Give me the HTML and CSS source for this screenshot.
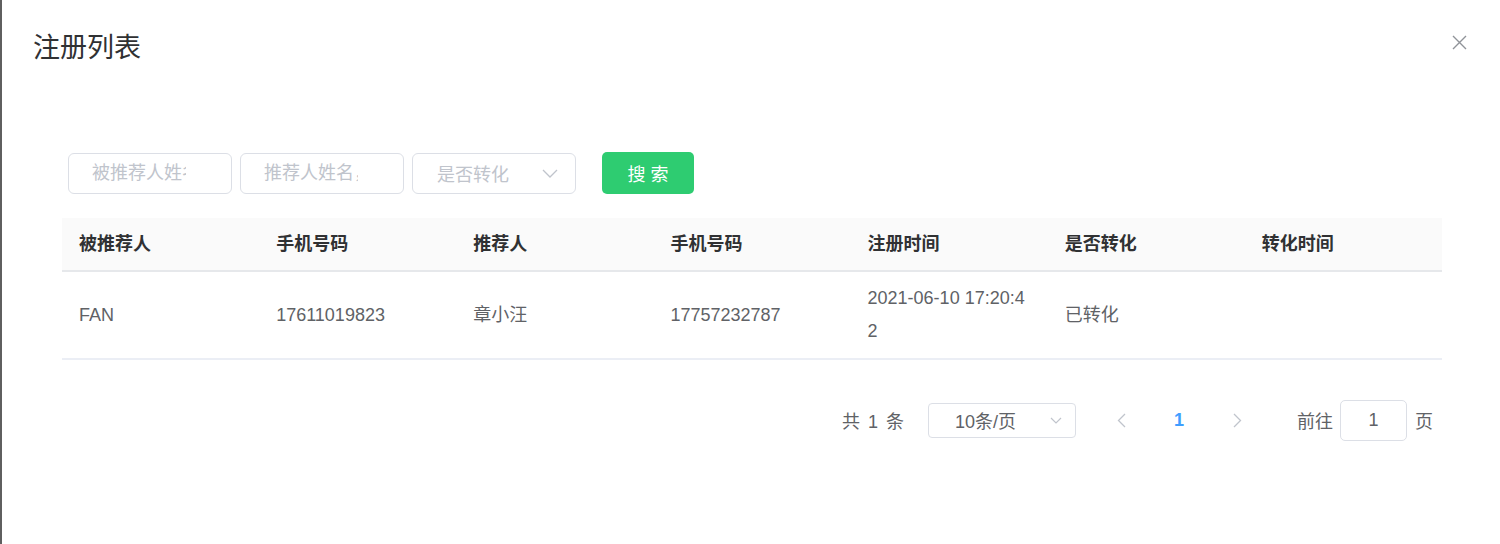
FILE: index.html
```html
<!DOCTYPE html>
<html lang="zh-CN">
<head>
<meta charset="utf-8">
<title>注册列表</title>
<link rel="stylesheet" href="styles.css">
</head>
<body>
<div class="dialog">
  <div class="dialog-header">
    <span class="dialog-title">注册列表</span>
    <button class="close-btn" aria-label="关闭">
      <svg width="15" height="15" viewBox="0 0 15 15"><path d="M1 1 L14 14 M14 1 L1 14" stroke="#909399" stroke-width="1.4" fill="none"/></svg>
    </button>
  </div>
  <div class="dialog-body">
    <div class="search-row">
      <input class="field" type="text" placeholder="被推荐人姓名，手机号">
      <input class="field" type="text" placeholder="推荐人姓名，手机号">
      <div class="field select-field">
        <span class="placeholder">是否转化</span>
        <svg class="arrow" width="16" height="9" viewBox="0 0 16 9"><path d="M1 1 L8 8 L15 1" stroke="#c0c4cc" stroke-width="1.3" fill="none"/></svg>
      </div>
      <button class="search-btn">搜 索</button>
    </div>

    <table class="data-table">
      <thead>
        <tr>
          <th>被推荐人</th>
          <th>手机号码</th>
          <th>推荐人</th>
          <th>手机号码</th>
          <th>注册时间</th>
          <th>是否转化</th>
          <th>转化时间</th>
        </tr>
      </thead>
      <tbody>
        <tr>
          <td>FAN</td>
          <td>17611019823</td>
          <td>章小汪</td>
          <td>17757232787</td>
          <td>2021-06-10 17:20:42</td>
          <td>已转化</td>
          <td></td>
        </tr>
      </tbody>
    </table>

    <div class="pagination">
      <span class="total">共 1 条</span>
      <div class="size-select">
        <span>10条/页</span>
        <svg class="arrow-sm" width="12" height="7" viewBox="0 0 12 7"><path d="M1 1 L6 6 L11 1" stroke="#c0c4cc" stroke-width="1.2" fill="none"/></svg>
      </div>
      <button class="page-nav" aria-label="上一页">
        <svg width="9" height="15" viewBox="0 0 9 15"><path d="M8 1 L1.5 7.5 L8 14" stroke="#c0c4cc" stroke-width="1.3" fill="none"/></svg>
      </button>
      <span class="pager-num">1</span>
      <button class="page-nav" aria-label="下一页">
        <svg width="9" height="15" viewBox="0 0 9 15"><path d="M1 1 L7.5 7.5 L1 14" stroke="#c0c4cc" stroke-width="1.3" fill="none"/></svg>
      </button>
      <span class="jump">前往</span>
      <input class="jump-input" type="text" value="1">
      <span class="jump-suffix">页</span>
    </div>
  </div>
</div>
</body>
</html>
```

FILE: styles.css
```css
* { box-sizing: border-box; }

html, body {
  margin: 0;
  padding: 0;
  height: 544px;
  overflow: hidden;
}

body {
  background: #5f5f5f;
  font-family: "Liberation Sans", "Noto Sans CJK SC", sans-serif;
  color: #606266;
}

.dialog {
  margin-left: 2px;
  height: 544px;
  background: #ffffff;
  position: relative;
}

.dialog-header {
  padding: 33px 0 0 31px;
  height: 64px;
}

.dialog-title {
  font-size: 27px;
  line-height: 31px;
  color: #303133;
}

.close-btn {
  position: absolute;
  top: 35px;
  right: 33px;
  padding: 0;
  border: 0;
  background: transparent;
  width: 15px;
  height: 15px;
  display: block;
}

.close-btn svg { display: block; }

.dialog-body {
  padding: 88px 58px 0 60px;
}

.search-row {
  display: flex;
  align-items: center;
  padding-left: 6px;
  height: 42px;
}

.field {
  width: 164px;
  height: 41px;
  border: 1px solid #dcdfe6;
  border-radius: 6px;
  margin-right: 8px;
  padding: 0 45px 0 23px;
  font-family: "Liberation Sans", "Noto Sans CJK SC", sans-serif;
  font-size: 18px;
  color: #606266;
  background: #fff;
  outline: none;
}

.field::placeholder { color: #c0c4cc; }

.select-field {
  display: flex;
  align-items: center;
  justify-content: space-between;
  padding: 0 17px 0 24px;
}

.select-field .placeholder {
  color: #c0c4cc;
  font-size: 18px;
}

.arrow { display: block; }

.search-btn {
  margin-left: 18px;
  width: 92px;
  height: 42px;
  border: 0;
  border-radius: 5px;
  background: #2ecc71;
  color: #ffffff;
  font-family: "Liberation Sans", "Noto Sans CJK SC", sans-serif;
  font-size: 18px;
  padding: 0;
}

.data-table {
  margin-top: 24px;
  width: 1380px;
  table-layout: fixed;
  border-collapse: collapse;
  font-size: 18px;
}

.data-table th {
  background: #fafafa;
  color: #303133;
  font-weight: 600;
  text-align: left;
  padding: 10px 17px;
  line-height: 32px;
  border-bottom: 2px solid #e6e8eb;
}

.data-table td {
  color: #606266;
  padding: 10px 17px;
  line-height: 33px;
  word-break: break-all;
  border-bottom: 2px solid #ebeef5;
  vertical-align: middle;
}

.pagination {
  margin-top: 39px;
  height: 42px;
  display: flex;
  align-items: center;
  justify-content: flex-end;
  padding-right: 9px;
  font-size: 18px;
  color: #606266;
}

.total {
  margin-right: 24px;
  word-spacing: 3px;
}

.size-select {
  width: 148px;
  height: 35px;
  border: 1px solid #dcdfe6;
  border-radius: 4px;
  display: flex;
  align-items: center;
  justify-content: space-between;
  padding: 0 13px 0 26px;
  margin-right: 16px;
}

.arrow-sm { display: block; }

.page-nav {
  width: 58px;
  height: 35px;
  border: 0;
  background: transparent;
  padding: 0;
  display: flex;
  align-items: center;
  justify-content: center;
}

.pager-num {
  width: 58px;
  text-align: center;
  color: #409eff;
  font-weight: 700;
}

.jump {
  margin-left: 31px;
  margin-right: 3px;
}

.jump-input {
  width: 67px;
  height: 41px;
  margin: 0 8px 0 4px;
  border: 1px solid #dcdfe6;
  border-radius: 5px;
  text-align: center;
  font-family: "Liberation Sans", "Noto Sans CJK SC", sans-serif;
  font-size: 18px;
  color: #606266;
  outline: none;
  padding: 0;
}
```
